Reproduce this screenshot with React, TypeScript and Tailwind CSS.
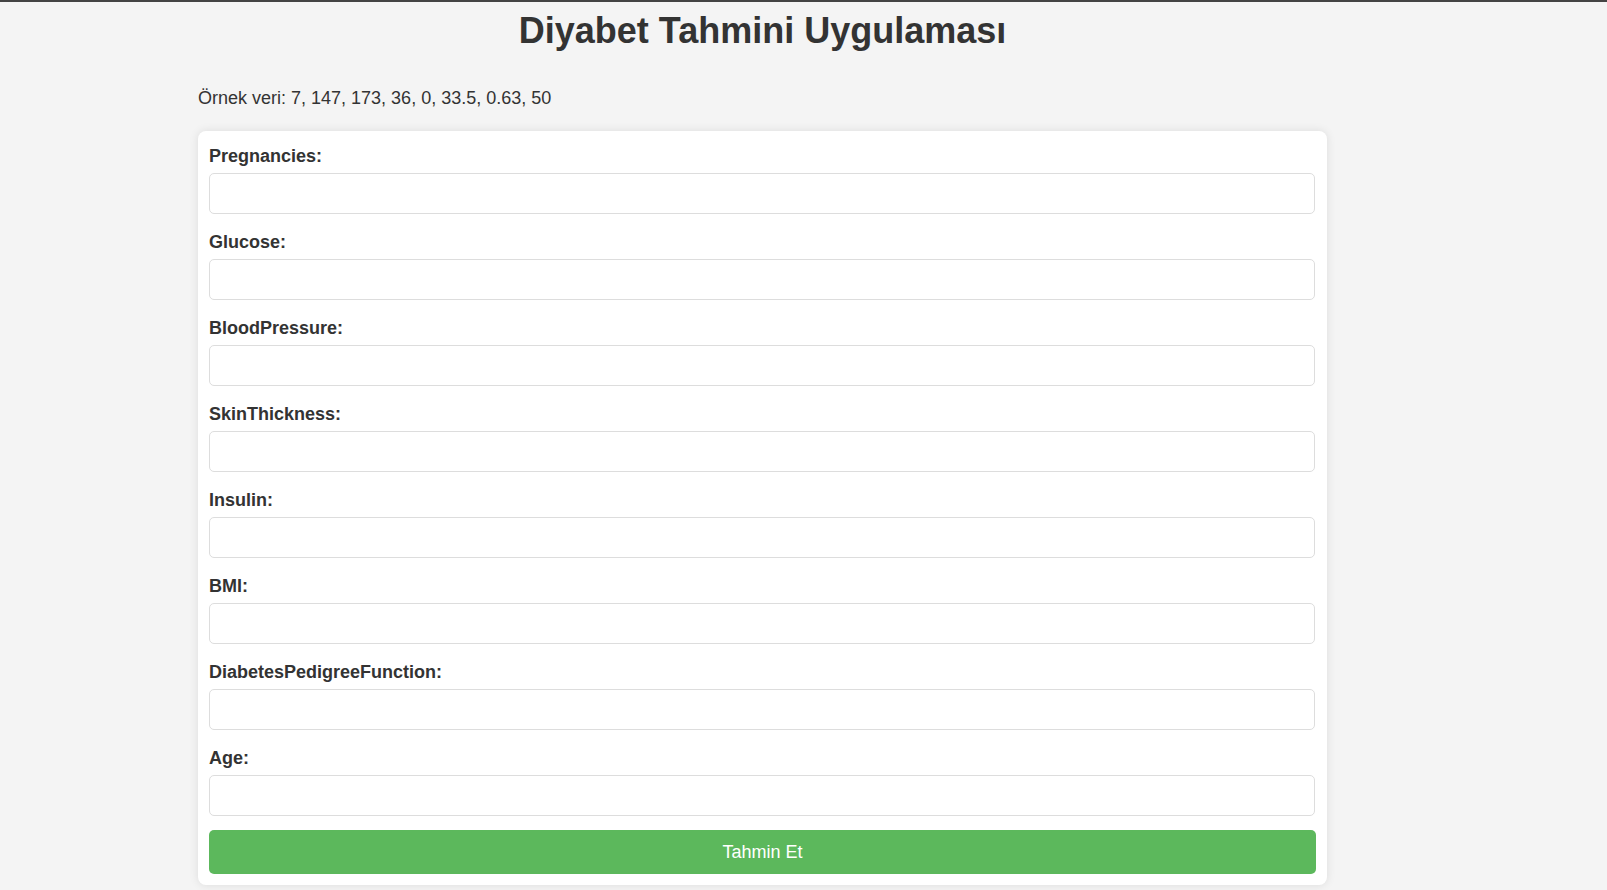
import React from "react";

const fields = [
  "Pregnancies",
  "Glucose",
  "BloodPressure",
  "SkinThickness",
  "Insulin",
  "BMI",
  "DiabetesPedigreeFunction",
  "Age",
];

export default function App() {
  return (
    <div
      className="min-h-[890px] w-full bg-[#f4f4f4] border-t-2 border-[#444] text-[#333]"
      style={{ fontFamily: '"Liberation Sans", Arial, sans-serif' }}
    >
      <div className="ml-[198px] w-[1129px] pb-[5px]">
        <h1 className="mt-[8px] text-center text-[36px] leading-[41px] font-bold">
          Diyabet Tahmini Uygulaması
        </h1>
        <p className="mt-[37px] text-[18px] leading-[21px]">
          Örnek veri: 7, 147, 173, 36, 0, 33.5, 0.63, 50
        </p>
        <form
          className="mt-[22px] flex flex-col rounded-[8px] bg-white px-[11px] pt-[15px] pb-[11px] shadow-[0_0_10px_rgba(0,0,0,0.1)]"
          onSubmit={(e) => e.preventDefault()}
        >
          {fields.map((f, i) => (
            <div key={f} className={i === 0 ? "flex flex-col" : "mt-[18px] flex flex-col"}>
              <label className="text-[18px] leading-[21px] font-bold">{f}:</label>
              <input
                type="text"
                className="mt-[6px] h-[41px] w-[1106px] rounded-[5px] border border-[#ddd] bg-white px-[10px] text-[18px] outline-none"
              />
            </div>
          ))}
          <button
            type="submit"
            className="mt-[14px] h-[44px] w-full rounded-[5px] bg-[#5cb85c] text-[18px] text-white"
          >
            Tahmin Et
          </button>
        </form>
      </div>
    </div>
  );
}
